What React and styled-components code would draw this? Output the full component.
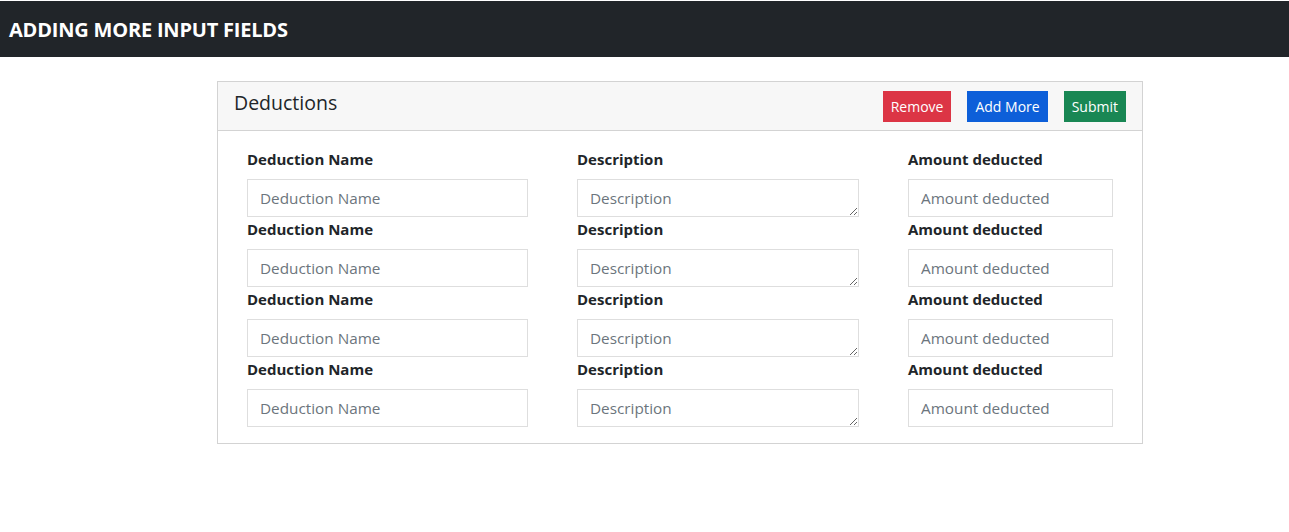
import React from "react";
import styled, { createGlobalStyle } from "styled-components";

const Global = createGlobalStyle`
  body {
    margin: 0;
    background: #fff;
    font-family: "Open Sans", "Noto Sans", sans-serif;
    color: #212529;
  }
  * { box-sizing: border-box; }
`;

const Page = styled.div`
  padding-top: 1px;
`;

const Navbar = styled.nav`
  height: 56px;
  background: #212529;
  display: flex;
  align-items: center;
  padding: 0 9px;
`;

const Brand = styled.h1`
  margin: 0;
  color: #fff;
  font-size: 20px;
  font-weight: 700;
  letter-spacing: -0.2px;
`;

const Card = styled.div`
  width: 926px;
  margin: 24px 0 0 217px;
  border: 1px solid #d3d3d3;
  background: #fff;
`;

const CardHeader = styled.div`
  display: flex;
  align-items: center;
  height: 49px;
  padding: 0 16px;
  background: #f7f7f7;
  border-bottom: 1px solid #d3d3d3;
`;

const Title = styled.h5`
  margin: 0 0 7px;
  font-size: 19.5px;
  font-weight: 400;
  flex: 1;
`;

const Actions = styled.div`
  display: flex;
  gap: 16px;
  margin: 0 0 0 1px;
`;

const Button = styled.button`
  height: 31px;
  padding: 0 8px;
  border: none;
  border-radius: 0;
  color: #fff;
  font-family: inherit;
  font-size: 14px;
  background: ${(p) => p.$bg};
  cursor: pointer;
`;

const CardBody = styled.div`
  padding: 16px 29px 16px 29px;
`;

const Row = styled.div`
  display: grid;
  grid-template-columns: 330px 331px 1fr;
`;

const Field = styled.div`
  display: flex;
  flex-direction: column;
`;

const Label = styled.label`
  display: block;
  font-size: 15px;
  font-weight: 700;
  line-height: 24px;
  margin-bottom: 8px;
`;

const inputCss = `
  height: 38px;
  border: 1px solid #dedede;
  border-radius: 0;
  padding: 6px 12px;
  font-family: "Open Sans", "Noto Sans", sans-serif;
  font-size: 15.3px;
  color: #212529;
  background: #fff;
  &::placeholder { color: #6c757d; }
`;

const Input = styled.input`
  ${inputCss}
  width: ${(p) => p.$w}px;
`;

const TextArea = styled.textarea`
  ${inputCss}
  width: ${(p) => p.$w}px;
  resize: both;
  display: block;
  line-height: 24px;
`;

const rows = [0, 1, 2, 3];

export default function App() {
  return (
    <Page>
      <Global />
      <Navbar>
        <Brand>ADDING MORE INPUT FIELDS</Brand>
      </Navbar>
      <Card>
        <CardHeader>
          <Title>Deductions</Title>
          <Actions>
            <Button $bg="#dc3545">Remove</Button>
            <Button $bg="#0d5fd9">Add More</Button>
            <Button $bg="#198754">Submit</Button>
          </Actions>
        </CardHeader>
        <CardBody>
          {rows.map((i) => (
            <Row key={i}>
              <Field>
                <Label>Deduction Name</Label>
                <Input $w={281} placeholder="Deduction Name" />
              </Field>
              <Field>
                <Label>Description</Label>
                <TextArea $w={282} rows={1} placeholder="Description" />
              </Field>
              <Field>
                <Label>Amount deducted</Label>
                <Input $w={205} placeholder="Amount deducted" />
              </Field>
            </Row>
          ))}
        </CardBody>
      </Card>
    </Page>
  );
}
